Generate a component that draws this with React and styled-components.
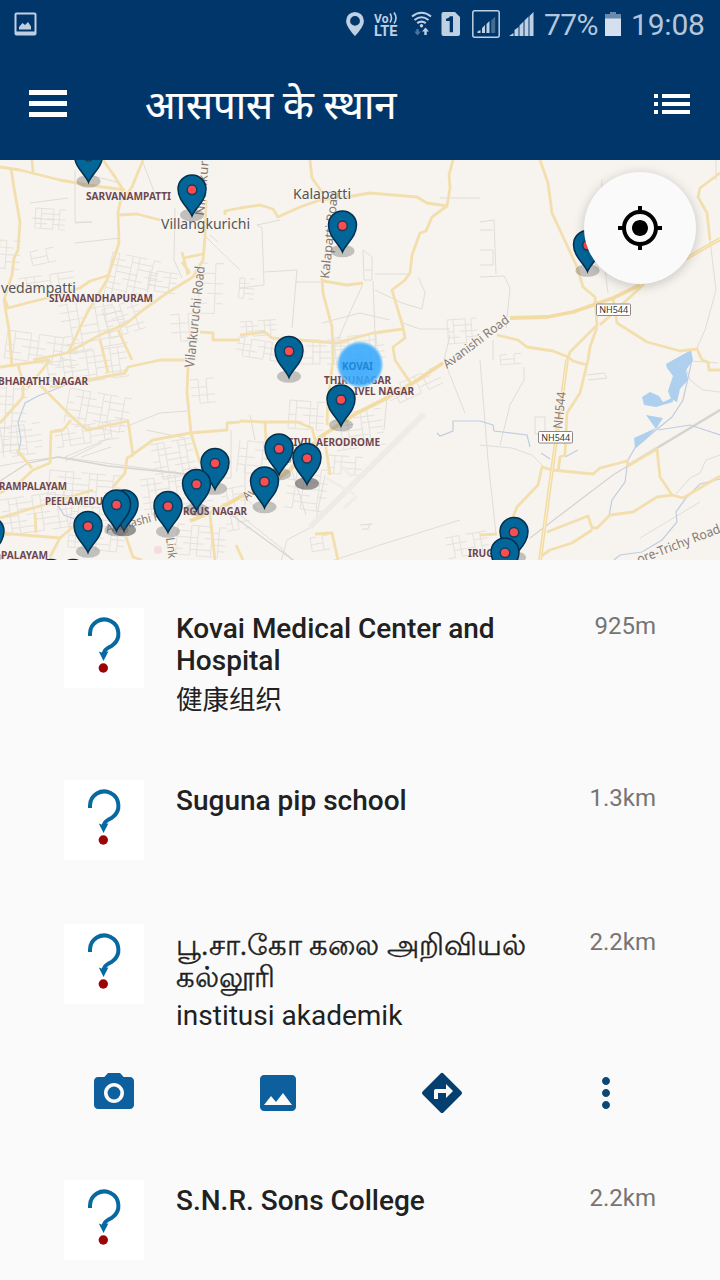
import React from "react";
import styled, { createGlobalStyle } from "styled-components";

const GlobalStyle = createGlobalStyle`
  * { box-sizing: border-box; }
  body {
    margin: 0;
    background: #fafafa;
    font-family: Roboto, "Noto Sans", "Noto Sans CJK SC", sans-serif;
    color: #212121;
  }
`;

const Screen = styled.div`
  width: 720px;
  height: 1280px;
  overflow: hidden;
  display: flex;
  flex-direction: column;
  background: #fafafa;
`;

const StatusBar = styled.div`
  height: 48px;
  flex: none;
  display: flex;
  align-items: center;
  padding: 0 15px 0 14px;
  background: #01366b;
  color: #c0d0e3;
`;

const StatusGroup = styled.div`
  display: flex;
  align-items: center;
  margin-left: auto;
`;

const StatusIcon = styled.svg`
  display: block;
  flex: none;
  width: ${(p) => p.$w}px;
  height: 48px;
  margin-right: ${(p) => p.$gap || 0}px;
  fill: currentColor;
`;

const StatusText = styled.span`
  width: ${(p) => p.$w}px;
  margin-right: ${(p) => p.$gap || 0}px;
  font-size: 30px;
  line-height: 48px;
  padding-top: 1px;
  white-space: nowrap;
  font-weight: 400;
  letter-spacing: ${(p) => p.$tracking || 0}px;
  color: #b4c6dc;
`;

const Header = styled.header`
  height: 112px;
  flex: none;
  display: flex;
  align-items: center;
  padding: 0 24px 0 29px;
  background: #01366b;
  color: #fff;
`;

const MenuIcon = styled.span`
  width: 38px;
  display: flex;
  flex-direction: column;
  gap: 6px;
  padding-bottom: 1px;
`;

const MenuBar = styled.span`
  height: 5px;
  background: #fff;
`;

const Title = styled.h1`
  flex: 1;
  margin: 0 0 0 78px;
  padding-top: 3px;
  font-size: 40px;
  line-height: 56px;
  font-weight: 400;
  white-space: nowrap;
  -webkit-text-stroke: 0.2px #fff;
`;

const Glyph = styled.svg`
  display: block;
  width: 48px;
  height: 48px;
  fill: ${(p) => p.$color};
`;

const MapPanel = styled.section`
  position: relative;
  height: 400px;
  flex: none;
  overflow: hidden;
  background: #f7f4ef;
`;

const MapCanvas = styled.svg`
  display: block;
  width: 720px;
  height: 400px;
`;

const LocateButton = styled.button`
  position: absolute;
  top: 12px;
  right: 24px;
  width: 112px;
  height: 112px;
  border: 0;
  border-radius: 50%;
  padding: 0;
  display: flex;
  align-items: center;
  justify-content: center;
  background: #fafafa;
  box-shadow: 0 2px 12px rgba(0, 0, 0, 0.2);
`;

const PlaceList = styled.main`
  flex: 1;
  padding-top: 16px;
`;

const PlaceRow = styled.article`
  display: flex;
  align-items: flex-start;
  padding: 32px 64px;
`;

const Thumb = styled.svg`
  flex: none;
  width: 80px;
  height: 80px;
  margin-right: 32px;
  background: #fff;
`;

const PlaceInfo = styled.div`
  flex: 1;
  min-width: 0;
`;

const PlaceName = styled.h2`
  margin: 0;
  padding-top: 5px;
  width: 366px;
  font-size: ${(p) => (p.$tamil ? 29 : 28)}px;
  line-height: 32px;
  font-weight: ${(p) => (p.$tamil ? 400 : 500)};
  -webkit-text-stroke: ${(p) => (p.$tamil ? "0.4px #212121" : "0")};
`;

const Category = styled.p`
  margin: 5px 0 0;
  height: 34px;
  font-size: ${(p) => (p.$cjk ? 26.5 : 28)}px;
  line-height: 36px;
`;

const Distance = styled.span`
  flex: none;
  font-size: 24px;
  line-height: 36px;
  color: #757575;
`;

const Actions = styled.nav`
  display: grid;
  grid-template-columns: repeat(4, 164px);
  justify-items: center;
  padding: 5px 32px 31px;
`;

const yellowRoads = [
  "M0 167L20 170 60 180 88 185 125 190",
  "M11 168L14 188 20 222 18 250 14 258 12 275 4 300 9 330 12 367",
  "M32 160L33 172",
  "M103 160L115 177 123 190 118 212 119 243 107 280 87 313 68 353",
  "M143 160L132 187 123 200",
  "M118 215L137 214 160 220",
  "M5 300L8 308 27 303 47 298 80 288 90 281 110 275",
  "M33 360L67 353 100 335 127 323 143 310 167 293 193 277 203 260 205 237 206 200",
  "M182 252L188 275M184 258L203 254M182 262L190 273",
  "M100 340L105 360 108 373",
  "M118 330L132 360",
  "M200 332L213 333 213 340 240 340",
  "M225 215V211L240 208 260 205 273 209 278 217 300 207 320 200 347 197 370 193 417 197 427 203 447 206 450 188 449 175 453 160",
  "M447 206L432 217 426 231 420 233 412 255 410 273 405 280 392 290 403 327 405 338 393 347 395 360 412 385",
  "M310 160L312 178 322 192",
  "M322 278L323 293 332 327 333 360 328 400 327 425",
  "M323 281L347 285 363 283",
  "M240 335L265 332 272 338 337 343 373 333 403 329",
  "M324 435L330 475",
  "M240 421L263 422 297 422 312 428 315 440M265 422L267 460",
  "M315 534L332 533 338 560",
  "M540 160L548 183 552 213 577 267 583 287 595 297 597 325 570 352 567 360",
  "M597 327L590 347 588 360 580 393 567 413 565 455 560 457 558 472",
  "M643 285L600 325M613 298L617 323 647 342 680 351 697 349 702 360 708 362 709 370H720",
  "M497 335L518 340 527 347 553 351 568 357 573 361 587 365",
  "M720 173L700 188 698 197 707 213 710 240",
  "M480 535L497 534M513 517L517 507 538 485 542 467 552 470 593 474 600 468 627 461 628 466 657 449 660 477 672 495 683 498 720 476",
  "M672 495L657 497 633 512 610 515 597 528 592 528 588 516 547 532M592 530L572 543 550 550 540 557",
  "M0 367L50 360M18 365L23 382 23 397 0 423M28 388L50 360",
  "M40 385L73 418 87 430 128 421 133 455 127 458 125 473 113 487",
  "M71 420L63 430 51 432 50 463 33 470 20 482 0 493M17 450L32 468",
  "M50 387L125 373 128 367 160 360 187 360 188 360",
  "M188 367L187 393 191 433 200 463M210 515L215 560",
  "M132 455L153 440 190 433 227 430 227 423 240 422",
  "M0 518L50 503 93 490",
  "M0 533L60 538 73 527M35 513L36 533M60 538L50 557M126 537L133 557 142 560M236 545L243 560",
];

const highways = [
  "M190 521L217 510 240 497 267 487 290 470 320 437 357 413 383 400 413 383 443 363",
  "M510 318L547 317 573 312 613 298 640 285 720 239",
  "M567 360L552 470 540 560",
];

const lanes = [
  "M30 203L68 198M32 218L55 220M75 243L120 238M75 170V222H92L75 223M90 175L120 183M142 160L155 194",
  "M175 208L174 260 182 278M206 237L214 245 240 270M218 242L210 235",
  "M240 288L264 285 262 228 257 225 280 220M264 272L297 270 292 328M295 282H322",
  "M363 284L350 312 338 340M373 281L376 360M363 250L372 257 372 280 364 280ZM365 270H372",
  "M375 274H410M375 290L402 303 422 309 425 292 418 277M322 323L360 313 390 320M440 198H480M400 322L420 329H450",
  "M480 222L494 220 496 274M480 230H493M480 250H493V265H480M480 277L504 276 510 288 506 328M493 340L493 360",
  "M602 180L600 230 608 293M710 240L716 290 705 330 696 350M683 360L690 380 703 390 720 392M716 160V180",
  "M450 335L444 360 465 413M480 445L512 448 532 455 544 467M480 360L488 460 496 534M524 367L524 380 510 405 500 445M535 417V434H545V417Z",
  "M640 538L700 502M460 520L380 545 310 568M388 386L384 430M280 565L287 540 315 525 325 475",
  "M0 466L33 460 60 457 120 465 195 475M65 457L110 438M65 461L102 443M81 457L111 447",
  "M130 425L160 413 187 411M146 430L185 438M231 430V478L205 478M245 465V505M250 415L255 440M273 455V470",
  "M240 515L280 547 295 563M240 493L258 510M291 468L306 515M360 525L373 524M362 529H368L370 523",
  "M690 361L718 363M587 375L604 373 607 378 588 380M676 494L690 478 700 473 706 460 720 455",
];

const rail = ["M0 481L28 463 58 457 108 466 195 475", "M530 538L613 475 720 410", "M225 510L300 565"];

const streams = [
  "M68 384L38 396 25 403 18 422 21 440 18 455",
  "M437 433L440 436 453 431V421H480L493 425 494 431 527 435 530 447",
  "M692 360L683 400 672 417 656 430 635 448 628 460 625 482 612 500 609 516",
  "M720 479L700 484 686 498 676 512 677 522 662 540 642 552 620 555 614 560",
  "M541 453L550 459M578 450L565 457",
  "M54 499L64 515 77 520",
  "M658 430L690 425 720 435",
];

const lakes = [
  "M673 360L691 350 693 360 686 370 688 380 680 389 677 402 671 399 668 391 673 376 667 368 666 364Z",
  "M642 397L650 392 659 396 663 402 672 398 673 402 656 407 644 405Z",
  "M646 415L663 418 656 429Z",
  "M634 438L656 428 644 441 635 448Z",
];

/* x, y, columns, rows, cell width, cell height, rotation */
const neighbourhoods = [
  [58, 306, 7, 6, 9, 8, -10], [30, 252, 3, 2, 8, 7, -12], [36, 208, 5, 4, 6, 5, 4],
  [113, 252, 7, 7, 7, 6, 12], [10, 280, 8, 2, 8, 6, -8], [102, 310, 6, 5, 6, 6, -18],
  [8, 330, 9, 4, 8, 7, 8], [46, 357, 10, 5, 8, 6, -8], [0, 380, 4, 9, 7, 8, 3],
  [70, 388, 9, 5, 7, 7, 10], [0, 428, 5, 5, 8, 6, -8], [54, 430, 10, 3, 7, 6, -9],
  [50, 470, 9, 5, 8, 6, 5], [0, 500, 9, 6, 8, 6, -8], [72, 505, 8, 7, 7, 6, 6],
  [150, 445, 6, 6, 7, 6, -10], [140, 480, 10, 6, 7, 6, -8], [178, 524, 7, 5, 7, 6, 5],
  [150, 270, 4, 4, 7, 5, 8], [170, 315, 3, 3, 9, 9, -4], [200, 263, 3, 5, 8, 10, 2],
  [240, 322, 6, 3, 6, 5, -4], [238, 337, 7, 3, 7, 6, 9], [292, 340, 8, 4, 7, 6, 0],
  [334, 338, 7, 5, 7, 6, -6], [290, 400, 5, 4, 7, 7, 4], [332, 415, 7, 6, 7, 6, -8],
  [385, 390, 7, 3, 8, 6, -25], [290, 465, 5, 6, 8, 7, 8], [328, 455, 5, 3, 7, 6, 4],
  [240, 440, 4, 4, 8, 8, 6], [220, 490, 4, 6, 6, 7, -10], [447, 320, 5, 4, 6, 6, -4],
  [445, 538, 6, 3, 7, 7, -10], [240, 278, 3, 4, 5, 5, 4], [500, 355, 3, 2, 7, 5, -5],
  [310, 538, 3, 2, 6, 7, -10], [0, 240, 3, 4, 7, 7, 4], [190, 380, 3, 3, 8, 8, -5],
];

function streetPath(cols, rows, cw, ch) {
  let d = "";
  for (let r = 0; r <= rows; r++) {
    for (let c = 0; c < cols; c++) {
      if ((r * 7 + c * 5 + cols) % 4) d += `M${c * cw} ${r * ch}h${cw}`;
      if (r < rows && (r * 3 + c * 7 + rows) % 3) d += `M${c * cw} ${r * ch}v${ch}`;
    }
  }
  return d;
}

const districts = [
  ["SARVANAMPATTI", 86, 200, 85], ["SIVANANDHAPURAM", 49, 302, 104],
  ["BHARATHI NAGAR", -2, 385, 90], ["RAMPALAYAM", -1, 490, 68],
  ["PEELAMEDU", 45, 505, 58], ["PALAYAM", 1, 559, 47], ["RGUS NAGAR", 183, 515, 64],
  ["THIRUNAGAR", 324, 383.5, 67], ["IVEL NAGAR", 354, 395, 60],
  ["CIVIL AERODROME", 287, 446, 93], ["IRUGUR", 468, 557, 40],
];

const towns = [
  ["Kalapatti", 293, 199, 58], ["Villangkurichi", 161, 229, 89], ["vedampatti", 1, 293, 75],
];

const roadNames = [
  ["Vilankuruchi Road", 194, 368, -84, 102, 13.5], ["Nilankuruchi", 204, 216, -85, 82, 13],
  ["Kalapatti Road", 329, 279, -84, 88, 12.5], ["Avanishi Road", 447, 369, -37, 79, 12.5],
  ["Avanashi Road", 107, 533, -14, 75, 12], ["Avanashi Road", 247, 501, -42, 74, 12],
  ["Link Road", 166, 538, 83, 50, 12], ["NH544", 562, 429, -84, 37, 12.5],
  ["ore-Trichy Road", 639, 564, -21, 88, 13],
];

const pins = [
  [88.5, 182.3], [192, 216], [342.5, 252], [587.5, 271.5], [289, 377.5], [341, 426],
  [279, 475], [307, 484.5, true], [264.5, 508], [215, 489.5], [196.5, 510.5], [88, 552.5],
  [124, 531, true], [116.5, 531], [168, 532.5], [514, 558.5], [505, 579], [-10, 558],
  [51, 600.5], [73, 600.5],
];

function Pin({ x, y, dark }) {
  return (
    <g transform={`translate(${x} ${y})`}>
      <ellipse cy="-1" rx="12" ry="6.3" fill="#555" opacity={dark ? 0.6 : 0.32} />
      <path
        d="M0 0C-3-8-14-15-14-27A14 14 0 0 1 14-27C14-15 3-8 0 0Z"
        fill="#026699"
        stroke="#03304d"
        strokeWidth="1.5"
      />
      <circle cy="-26.2" r="4.8" fill="#fb4c52" stroke="#123d5c" strokeWidth="1.5" />
    </g>
  );
}

function Shield({ x, y }) {
  return (
    <g>
      <rect x={x} y={y} width="34" height="11.5" rx="1" fill="#fff" stroke="#8d8a86" />
      <text x={x + 2.7} y={y + 9.2} fontSize="9.4" fill="#333" textLength="29" lengthAdjust="spacingAndGlyphs">
        NH544
      </text>
    </g>
  );
}

function PlacesMap() {
  return (
    <MapCanvas viewBox="0 160 720 400" fontFamily="'Noto Sans', 'Open Sans', sans-serif">
      <defs>
        <radialGradient id="here">
          <stop offset="0" stopColor="#2ea5ff" />
          <stop offset=".82" stopColor="#35a8fd" />
          <stop offset=".9" stopColor="#6cc1fb" />
          <stop offset="1" stopColor="#a9dafa" stopOpacity="0" />
        </radialGradient>
      </defs>
      <g fill="none" stroke="#e0dcd8" strokeWidth="1">
        {neighbourhoods.map(([x, y, c, r, cw, ch, a], i) => (
          <path key={i} d={streetPath(c, r, cw, ch)} transform={`translate(${x} ${y}) rotate(${a})`} opacity=".8" />
        ))}
        {lanes.map((d, i) => <path key={i} d={d} />)}
      </g>
      <path d="M310 527L424 414" stroke="#eeebe7" strokeWidth="5.5" />
      <path d="M326 478L354 494M340 464L352 477M344 508L357 496" stroke="#f0ede9" strokeWidth="3" />
      <g fill="none" stroke="#d6d3d0" strokeWidth="1.3">
        {rail.map((d, i) => <path key={i} d={d} />)}
        <path d="M627 466L720 410" strokeWidth="2.6" />
      </g>
      <g fill="none" stroke="#bfcde1" strokeWidth="1.2">
        {streams.map((d, i) => <path key={i} d={d} />)}
      </g>
      <g fill="#aecfee">{lakes.map((d, i) => <path key={i} d={d} />)}</g>
      <g fill="none" stroke="#f3dfae" strokeWidth="2.8" strokeLinejoin="round">
        {yellowRoads.map((d, i) => <path key={i} d={d} />)}
      </g>
      <g fill="none" stroke="#f2dca4" strokeWidth="3.8" strokeLinejoin="round">
        {highways.map((d, i) => <path key={i} d={d} />)}
      </g>
      <path d="M567 360L552 470 540 560M640 285L720 239" fill="none" stroke="#faefcf" strokeWidth="1" />
      <circle cx="158" cy="550" r="4" fill="#f5dcdf" />
      <g fill="#867970">
        {roadNames.map(([t, x, y, a, w, s], i) => (
          <text key={i} transform={`translate(${x} ${y}) rotate(${a})`} fontSize={s} textLength={w} lengthAdjust="spacingAndGlyphs" stroke="#f7f4ef" strokeWidth="1.5" paintOrder="stroke">
            {t}
          </text>
        ))}
      </g>
      <g fill="#6e4650" fontSize="10" fontWeight="700" stroke="#f7f4ef" strokeWidth="1.5" paintOrder="stroke">
        {districts.map(([t, x, y, w]) => (
          <text key={t} x={x} y={y} textLength={w} lengthAdjust="spacingAndGlyphs">{t}</text>
        ))}
      </g>
      <g fill="#555" fontSize="14" stroke="#f7f4ef" strokeWidth="1.2" paintOrder="stroke">
        {towns.map(([t, x, y, w]) => (
          <text key={t} x={x} y={y} textLength={w} lengthAdjust="spacingAndGlyphs">{t}</text>
        ))}
      </g>
      <Shield x={596.5} y={304} />
      <Shield x={538.5} y={431.5} />
      <circle cx="360" cy="364.5" r="24" fill="url(#here)" opacity=".87" />
      <text x="342" y="370" fontSize="10" fontWeight="700" fill="#1d87d6" textLength="31">KOVAI</text>
      {pins.map(([x, y, dark], i) => <Pin key={i} x={x} y={y} dark={dark} />)}
    </MapCanvas>
  );
}

function UnknownPlace() {
  return (
    <Thumb viewBox="0 0 80 80">
      <path
        d="M26 28V25.5A14.2 14.2 0 1 1 48.8 37C45 40.2 40.5 40 39.6 46"
        fill="none"
        stroke="#0669a0"
        strokeWidth="4"
      />
      <path d="M34.8 43.5L39 45 44.5 43.3 39.5 53Z" fill="#0669a0" />
      <circle cx="39.3" cy="60" r="4.7" fill="#9b0508" />
    </Thumb>
  );
}

function Place({ name, category, distance, tamil, cjk }) {
  return (
    <PlaceRow>
      <UnknownPlace />
      <PlaceInfo>
        <PlaceName $tamil={tamil}>{name}</PlaceName>
        {category && <Category $cjk={cjk}>{category}</Category>}
      </PlaceInfo>
      <Distance>{distance}</Distance>
    </PlaceRow>
  );
}

export default function App() {
  return (
    <Screen>
      <GlobalStyle />
      <StatusBar>
        <StatusIcon $w={23} viewBox="0 0 23 48">
          <path fillRule="evenodd" d="M2.5 12.5h18a2 2 0 0 1 2 2v19a2 2 0 0 1-2 2h-18a2 2 0 0 1-2-2v-19a2 2 0 0 1 2-2ZM2.5 14.5v17h18v-17Z" />
          <path d="M5 29.5V27l3.5-4 2.5 2 3-3 3 4.5v3Z" />
        </StatusIcon>
        <StatusGroup>
          <StatusIcon $w={18} $gap={10} viewBox="0 0 18 48">
            <path fillRule="evenodd" d="M9 12a8.9 8.9 0 0 1 8.9 8.9C17.9 27 9 36 9 36S.1 27 .1 20.9A8.9 8.9 0 0 1 9 12Zm0 4a4.9 4.9 0 1 0 0 9.8A4.9 4.9 0 0 0 9 16Z" />
          </StatusIcon>
          <StatusIcon $w={24} $gap={13} viewBox="0 0 24 48">
            <text x="0" y="22.5" fontSize="12" fontWeight="700" textLength="14.5">Vo</text>
            <path d="M16 13.5q3 4.5 0 9M20 12.5q4 5.5 0 11" fill="none" stroke="currentColor" strokeWidth="1.6" />
            <text x="0" y="36" fontSize="14" fontWeight="700" textLength="23.5" lengthAdjust="spacingAndGlyphs">LTE</text>
          </StatusIcon>
          <StatusIcon $w={21} $gap={9} viewBox="0 0 21 48">
            <path d="M1 16.5q9.5-7.5 19 0M3.5 20q7-5.5 14 0M6.2 23.2q4.3-3.2 8.6 0" fill="none" stroke="currentColor" strokeWidth="2.1" />
            <circle cx="10.5" cy="25.8" r="1.7" />
            <path d="M14.5 27.5l3.5 4h-2.3V35h-2.4v-3.5H11Z" />
            <path d="M6.5 35.5l-3.3-4h2.1V29h2.4v2.5h2.1Z" opacity=".4" />
          </StatusIcon>
          <StatusIcon $w={19} $gap={12} viewBox="0 0 19 48">
            <path fillRule="evenodd" d="M2.5 12h11.5l5 5v17a2 2 0 0 1-2 2H2.5a2 2 0 0 1-2-2V14a2 2 0 0 1 2-2ZM9 16.3Q7.8 18.4 5 18.8V21H8.7v11.2H12V16.3Z" />
          </StatusIcon>
          <StatusIcon $w={28} $gap={9} viewBox="0 0 28 48">
            <rect x=".8" y="10.8" width="26.4" height="26.4" rx="2" fill="none" stroke="currentColor" strokeWidth="1.5" />
            <path d="M5.5 33v-1.5l3-1.5v3ZM10 33v-5l3-3v8ZM14.5 33v-9l3-3v12Z" />
            <path d="M19.2 33V20.5l4-4V33Z" opacity=".35" />
          </StatusIcon>
          <StatusIcon $w={25} $gap={10} viewBox="0 0 25 48">
            <path d="M0 36l4.5-3v3ZM5.5 36v-6l4-3v9ZM10.5 36V25.5l4-4V36ZM15.5 36V20.5l4-4V36ZM20.5 36V16l4-4v24Z" />
          </StatusIcon>
          <StatusText $w={54} $gap={7} $tracking={-0.6}>77%</StatusText>
          <StatusIcon $w={16} $gap={10} viewBox="0 0 16 48">
            <path d="M5 12h6v2h5v5H0v-5h5Z" opacity=".55" />
            <path d="M0 18.5h16V36H0Z" fill="#d5e0ee" />
          </StatusIcon>
          <StatusText $w={74} $tracking={-0.2}>19:08</StatusText>
        </StatusGroup>
      </StatusBar>

      <Header>
        <MenuIcon><MenuBar /><MenuBar /><MenuBar /></MenuIcon>
        <Title>आसपास के स्थान</Title>
        <Glyph $color="#fff" viewBox="0 0 24 24">
          <path d="M3 13h2v-2H3v2zm0 4h2v-2H3v2zm0-8h2V7H3v2zm4 4h14v-2H7v2zm0 4h14v-2H7v2zM7 7v2h14V7H7z" />
        </Glyph>
      </Header>

      <MapPanel>
        <PlacesMap />
        <LocateButton>
          <Glyph $color="#000" viewBox="0 0 24 24">
            <path d="M12 8c-2.21 0-4 1.79-4 4s1.79 4 4 4 4-1.79 4-4-1.79-4-4-4zm8.94 3c-.46-4.17-3.77-7.48-7.94-7.94V1h-2v2.06C6.83 3.52 3.52 6.83 3.06 11H1v2h2.06c.46 4.17 3.77 7.48 7.94 7.94V23h2v-2.06c4.17-.46 7.48-3.77 7.94-7.94H23v-2h-2.06zM12 19c-3.87 0-7-3.13-7-7s3.13-7 7-7 7 3.13 7 7-3.13 7-7 7z" />
          </Glyph>
        </LocateButton>
      </MapPanel>

      <PlaceList>
        <Place name="Kovai Medical Center and Hospital" category="健康组织" distance="925m" cjk />
        <Place name="Suguna pip school" distance="1.3km" />
        <Place name="பூ.சா.கோ கலை அறிவியல் கல்லூரி" category="institusi akademik" distance="2.2km" tamil />
        <Actions>
          <Glyph $color="#0d5f9d" viewBox="0 0 24 24">
            <circle cx="12" cy="12" r="3.2" />
            <path d="M9 2L7.17 4H4c-1.1 0-2 .9-2 2v12c0 1.1.9 2 2 2h16c1.1 0 2-.9 2-2V6c0-1.1-.9-2-2-2h-3.17L15 2H9zm3 15c-2.76 0-5-2.24-5-5s2.24-5 5-5 5 2.24 5 5-2.24 5-5 5z" />
          </Glyph>
          <Glyph $color="#0d5f9d" viewBox="0 0 24 24">
            <path d="M21 19V5c0-1.1-.9-2-2-2H5c-1.1 0-2 .9-2 2v14c0 1.1.9 2 2 2h14c1.1 0 2-.9 2-2zM8.5 13.5l2.5 3.01L14.5 12l4.5 6H5l3.5-4.5z" />
          </Glyph>
          <Glyph $color="#043f70" viewBox="0 0 24 24">
            <path d="M21.71 11.29l-9-9a.996.996 0 0 0-1.41 0l-9 9a.996.996 0 0 0 0 1.41l9 9c.39.39 1.02.39 1.41 0l9-9a.996.996 0 0 0 0-1.41zM14 14.5V12h-4v3H8v-4c0-.55.45-1 1-1h5V7.5l3.5 3.5-3.5 3.5z" />
          </Glyph>
          <Glyph $color="#0b4877" viewBox="0 0 24 24">
            <path d="M12 8c1.1 0 2-.9 2-2s-.9-2-2-2-2 .9-2 2 .9 2 2 2zm0 2c-1.1 0-2 .9-2 2s.9 2 2 2 2-.9 2-2-.9-2-2-2zm0 6c-1.1 0-2 .9-2 2s.9 2 2 2 2-.9 2-2-.9-2-2-2z" />
          </Glyph>
        </Actions>
        <Place name="S.N.R. Sons College" distance="2.2km" />
      </PlaceList>
    </Screen>
  );
}
